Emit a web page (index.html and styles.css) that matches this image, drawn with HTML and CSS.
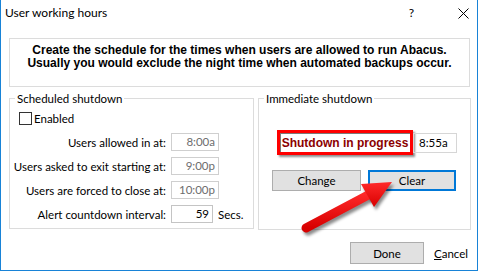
FILE: index.html
```html
<!DOCTYPE html>
<html>
<head>
<meta charset="utf-8">
<title>User working hours</title>
<link rel="stylesheet" href="styles.css">
</head>
<body>
<div class="window">
  <div class="titlebar">
    <span class="title">User working hours</span>
    <span class="help">?</span>
    <svg class="close" width="11" height="11" viewBox="0 0 11 11"><path d="M0.5 0.5 L10.5 10.5 M10.5 0.5 L0.5 10.5" stroke="#000" stroke-width="1" fill="none"/></svg>
  </div>
  <div class="intro">Create the schedule for the times when users are allowed to run Abacus.<br>Usually you would exclude the night time when automated backups occur.</div>
  <div class="groups">
    <div class="group sched">
      <div class="legend">Scheduled shutdown</div>
      <div class="check"><span class="box"></span><span>Enabled</span></div>
      <div class="rows">
        <span class="lbl">Users allowed in at:</span>
        <div class="cell"><span class="field dim">8:00a</span></div>
        <span class="lbl">Users asked to exit starting at:</span>
        <div class="cell"><span class="field dim">9:00p</span></div>
        <span class="lbl">Users are forced to close at:</span>
        <div class="cell"><span class="field dim">10:00p</span></div>
        <span class="lbl">Alert countdown interval:</span>
        <div class="cell"><span class="field short">59</span><span class="unit">Secs.</span></div>
      </div>
    </div>
    <div class="group immed">
      <div class="legend">Immediate shutdown</div>
      <div class="status"><span class="progress">Shutdown in progress</span><span class="field time">8:55a</span></div>
      <div class="btns"><button class="btn change">Change</button><button class="btn clear">Clear</button></div>
    </div>
  </div>
  <div class="footer"><button class="btn done">Done</button><span class="cancel"><u>C</u>ancel</span></div>
  <svg class="arrow" width="479" height="271" viewBox="0 0 479 271">
    <defs>
      <filter id="blur" x="-20%" y="-20%" width="140%" height="140%"><feGaussianBlur stdDeviation="1.5"/></filter>
      <linearGradient id="red" x1="0" y1="0" x2="0" y2="1">
        <stop offset="0" stop-color="#ff2a2a"/>
        <stop offset="1" stop-color="#d80000"/>
      </linearGradient>
    </defs>
    <g transform="translate(2,3)" fill="rgba(0,0,0,0.45)" stroke="rgba(0,0,0,0.45)" filter="url(#blur)">
      <line x1="306" y1="228" x2="372" y2="193" stroke-width="9" stroke-linecap="round"/>
      <polygon points="392,182 361,184 374,207" stroke="none"/>
    </g>
    <g fill="url(#red)" stroke="url(#red)">
      <line x1="306" y1="228" x2="372" y2="193" stroke-width="9" stroke-linecap="round"/>
      <polygon points="392,182 361,184 374,207" stroke="none"/>
    </g>
  </svg>
</div>
</body>
</html>
```
FILE: styles.css
```css
body {
  margin: 0;
  width: 479px;
  height: 271px;
  background: #fff;
  font-family: Lato, "Liberation Sans", sans-serif;
  font-size: 11.5px;
  color: #000;
  overflow: hidden;
}

.window {
  position: relative;
  width: 478px;
  height: 271px;
  box-sizing: border-box;
  border: 1px solid #1883d7;
  border-top: 0;
  display: flex;
  flex-direction: column;
}

.titlebar {
  height: 38px;
  flex: none;
  display: flex;
  align-items: flex-start;
  font-size: 12px;
}

.title {
  margin: 6px 0 0 4px;
  line-height: 14px;
}

.help {
  margin: 6px 0 0 auto;
  line-height: 14px;
}

.close {
  margin: 8px 8px 0 44px;
}

.intro {
  flex: none;
  margin-left: 8px;
  width: 461px;
  height: 49px;
  box-sizing: border-box;
  border: 1px solid #dcdcdc;
  padding-top: 5px;
  text-align: center;
  font: bold 12px/13px "Liberation Sans", sans-serif;
}

.groups {
  flex: none;
  display: flex;
  gap: 4px;
  margin: 11px 0 0 8px;
  align-items: flex-start;
}

.group {
  border: 1px solid #dcdcdc;
  box-sizing: border-box;
}

.sched {
  width: 245px;
  height: 131px;
}

.immed {
  width: 213px;
  height: 132px;
}

.legend {
  display: table;
  margin: -8px 0 0 5px;
  padding: 0 2px;
  background: #fff;
  line-height: 15px;
}

.check {
  display: flex;
  align-items: center;
  height: 13px;
  margin: 6px 0 0 9px;
}

.box {
  width: 13px;
  height: 13px;
  box-sizing: border-box;
  border: 1px solid #333;
  margin-right: 2px;
}

.rows {
  display: grid;
  grid-template-columns: 156px auto;
  column-gap: 5px;
  row-gap: 6px;
  margin-top: 8px;
  align-items: center;
}

.lbl {
  text-align: right;
  white-space: nowrap;
}

.cell {
  display: flex;
  align-items: center;
  gap: 5px;
}

.field {
  display: block;
  width: 48px;
  height: 18px;
  box-sizing: border-box;
  border: 1px solid #cfcfcf;
  padding-right: 3px;
  text-align: right;
  line-height: 16px;
}

.dim {
  color: #6d6d6d;
}

.short {
  width: 42px;
  border-color: #c4c4c4;
}

.status {
  display: flex;
  align-items: center;
  margin: 24px 0 0 18px;
}

.progress {
  width: 136px;
  height: 25px;
  box-sizing: border-box;
  border: 3px solid #ff0000;
  box-shadow: 2px 2px 2px rgba(0, 0, 0, 0.45), inset 1px 1px 0 #7a7a7a;
  display: flex;
  align-items: center;
  justify-content: center;
  font: bold 12px "Liberation Sans", sans-serif;
  color: #8b0000;
}

.time {
  width: 44px;
  height: 20px;
  line-height: 18px;
  text-align: left;
  padding: 0 0 0 5px;
  border-color: #d6d6d6;
}

.btns {
  display: flex;
  gap: 7px;
  margin: 15px 0 0 13px;
}

.btn {
  height: 21px;
  box-sizing: border-box;
  background: #e1e1e1;
  border: 1px solid #adadad;
  padding: 0;
  font: 11.5px Lato, "Liberation Sans", sans-serif;
  color: #000;
}

.change {
  width: 89px;
}

.clear {
  width: 88px;
  border: 2px solid #0078d7;
}

.footer {
  flex: none;
  display: flex;
  align-items: center;
  margin: 12px 0 0 349px;
}

.done {
  width: 74px;
  height: 22px;
}

.cancel {
  margin-left: 10px;
}

.arrow {
  position: absolute;
  left: -1px;
  top: 0;
  pointer-events: none;
}
```
